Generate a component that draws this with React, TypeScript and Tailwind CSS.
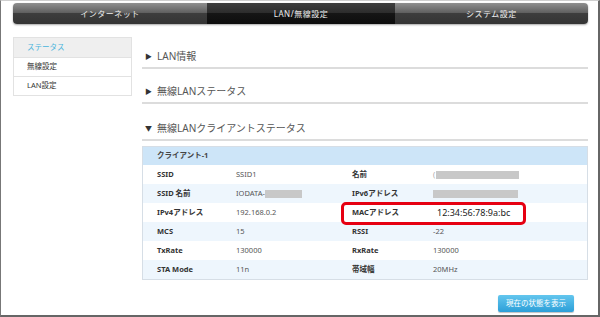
import React from 'react';

const font = { fontFamily: '"Noto Sans", "Noto Sans CJK JP", sans-serif' };

const tabs = [
  { label: 'インターネット', w: 'w-[194px]', active: false },
  { label: 'LAN/無線設定', w: 'w-[188px]', active: true },
  { label: 'システム設定', w: 'w-[193px]', active: false },
];

const menu = [
  { label: 'ステータス', active: true },
  { label: '無線設定', active: false },
  { label: 'LAN設定', active: false },
];

const Redacted: React.FC<{ w: string }> = ({ w }) => (
  <span className={`inline-block h-[8px] bg-[#c8c8c8] align-middle ${w}`} />
);

type Cell = React.ReactNode;
const rows: { l1: string; v1: Cell; l2: string; v2: Cell; mac?: boolean }[] = [
  { l1: 'SSID', v1: 'SSID1', l2: '名前', v2: (<span className="flex items-center gap-[1px]"><span className="text-[#aaa]">(</span><Redacted w="w-[83px]" /></span>) },
  { l1: 'SSID 名前', v1: (<span className="flex items-center">IODATA-<Redacted w="w-[37px]" /></span>), l2: 'IPv6アドレス', v2: <Redacted w="w-[85px]" /> },
  { l1: 'IPv4アドレス', v1: '192.168.0.2', l2: 'MACアドレス', v2: '12:34:56:78:9a:bc', mac: true },
  { l1: 'MCS', v1: '15', l2: 'RSSI', v2: '-22' },
  { l1: 'TxRate', v1: '130000', l2: 'RxRate', v2: '130000' },
  { l1: 'STA Mode', v1: '11n', l2: '帯域幅', v2: '20MHz' },
];

const Heading: React.FC<{ open?: boolean; h: string; children: React.ReactNode }> = ({ open, h, children }) => (
  <div className={`flex items-end border-b-2 border-[#dcdcdc] pb-[3px] ${h}`}>
    <span className="w-[15px] pl-[3px] text-[7px] leading-[15px] text-[#333]">{open ? '▼' : '▶'}</span>
    <span className="text-[10px] leading-[15px] text-[#555]">{children}</span>
  </div>
);

export default function App() {
  return (
    <div
      className="relative h-[317px] w-[600px] overflow-hidden border-t border-l border-r-2 border-b-2 border-t-[#cfcfcf] border-l-[#777] border-r-[#666] border-b-[#666] bg-white"
      style={font}
    >
      <div className="ml-[12px] mt-[2px] flex h-[21px] w-[575px] overflow-hidden rounded-[4px] shadow-[0_1px_2px_rgba(0,0,0,0.35)]">
        {tabs.map((t) => (
          <div
            key={t.label}
            className={`flex h-full items-center justify-center text-[8px] tracking-[0.5px] text-[#eee] ${t.w} ${
              t.active
                ? 'bg-[linear-gradient(to_bottom,#3e3e3e,#2b2b2b_50%,#151515_50%,#0d0d0d)]'
                : 'bg-[linear-gradient(to_bottom,#8f8f8f,#5c5c5c_50%,#3d3d3d_50%,#343434)]'
            }`}
          >
            {t.label}
          </div>
        ))}
      </div>

      <div className="mt-[13px] flex pl-[12px]">
        <div className="w-[119px] self-start border border-[#e2e2e2]">
          {menu.map((m, i) => (
            <div
              key={m.label}
              className={`flex h-[19px] items-center pl-[13px] text-[7.5px] ${i > 0 ? 'border-t border-[#e2e2e2]' : ''} ${
                m.active ? 'bg-[#efefef] text-[#48b4dc]' : 'bg-white text-[#333]'
              }`}
            >
              {m.label}
            </div>
          ))}
        </div>

        <div className="ml-[10px] w-[446px]">
          <Heading h="h-[32px]">LAN情報</Heading>
          <Heading h="h-[35px]">無線LANステータス</Heading>
          <Heading open h="h-[37px]">無線LANクライアントステータス</Heading>

          <div className="relative mt-[5px] border border-[#d6dee6] text-[7.5px] text-[#555]">
            <div className="flex h-[18px] items-center bg-[#cde5f8] pl-[14px] font-bold text-[#444]">クライアント-1</div>
            {rows.map((r, i) => (
              <div key={r.l1} className={`flex h-[19px] items-center ${i % 2 === 1 ? 'bg-[#eef6fd]' : 'bg-white'}`}>
                <div className="w-[93px] pl-[14px] font-bold text-[#333]">{r.l1}</div>
                <div className="w-[102px]">{r.v1}</div>
                <div className="w-[95px] pl-[14px] font-bold text-[#333]">{r.l2}</div>
                <div className={r.mac ? 'pl-[4px] text-[9px] text-[#222]' : ''}>{r.v2}</div>
              </div>
            ))}
            <div className="absolute left-[198px] top-[55px] h-[23px] w-[185px] rounded-[5px] border-[3px] border-[#e60012]" />
          </div>

          <div className="mt-[15px] flex justify-end pr-[14px]">
            <div className="flex h-[17px] w-[76px] items-center justify-center rounded-[2px] bg-[linear-gradient(to_bottom,#63c6ee,#2c9fd8)] text-[7.5px] text-white shadow-[0_1px_1px_rgba(0,0,0,0.25)]">
              現在の状態を表示
            </div>
          </div>
        </div>
      </div>
    </div>
  );
}
